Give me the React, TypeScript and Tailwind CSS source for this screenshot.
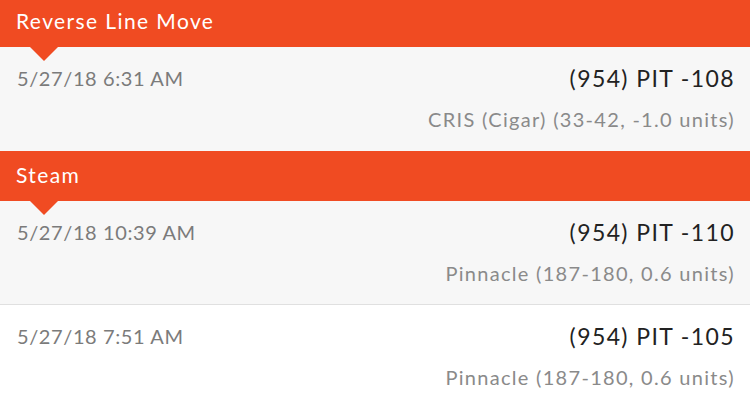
import React from "react";

const font = { fontFamily: "Lato, 'Open Sans', sans-serif" };

function Header({ title, h, pt }: { title: string; h: string; pt: string }) {
  return (
    <div className={`relative ${h} ${pt} bg-[#f04b22] pl-[16px] text-white text-[21px] leading-none tracking-[1.4px]`}>
      <span>{title}</span>
      <div className="absolute left-[30px] top-full z-10 w-0 h-0 border-l-[14px] border-r-[14px] border-t-[14px] border-l-transparent border-r-transparent border-t-[#f04b22]" />
    </div>
  );
}

function Row({ date, pick, book, cls }: { date: string; pick: string; book: string; cls: string }) {
  return (
    <div className={`flex justify-between pl-[17px] pr-[15px] ${cls}`}>
      <div className="pt-[21px] text-[20px] tracking-[0.6px] text-[#7b7b7b] leading-none">{date}</div>
      <div className="flex flex-col items-end pt-[20px]">
        <div className="text-[23px] tracking-[1.4px] text-[#222] leading-none">{pick}</div>
        <div className="mt-[19px] text-[20px] tracking-[1.3px] text-[#8a8a8a] leading-none">{book}</div>
      </div>
    </div>
  );
}

export default function App() {
  return (
    <div className="w-[750px] h-[405px] bg-white overflow-hidden" style={font}>
      <Header title="Reverse Line Move" h="h-[47px]" pt="pt-[10px]" />
      <Row date="5/27/18 6:31 AM" pick="(954) PIT -108" book="CRIS (Cigar) (33-42, -1.0 units)" cls="h-[104px] bg-[#f7f7f7]" />
      <Header title="Steam" h="h-[50px]" pt="pt-[13px]" />
      <Row date="5/27/18 10:39 AM" pick="(954) PIT -110" book="Pinnacle (187-180, 0.6 units)" cls="h-[103px] bg-[#f7f7f7]" />
      <div className="h-[1px] bg-[#e0e0e0]" />
      <Row date="5/27/18 7:51 AM" pick="(954) PIT -105" book="Pinnacle (187-180, 0.6 units)" cls="h-[100px] bg-white" />
    </div>
  );
}
